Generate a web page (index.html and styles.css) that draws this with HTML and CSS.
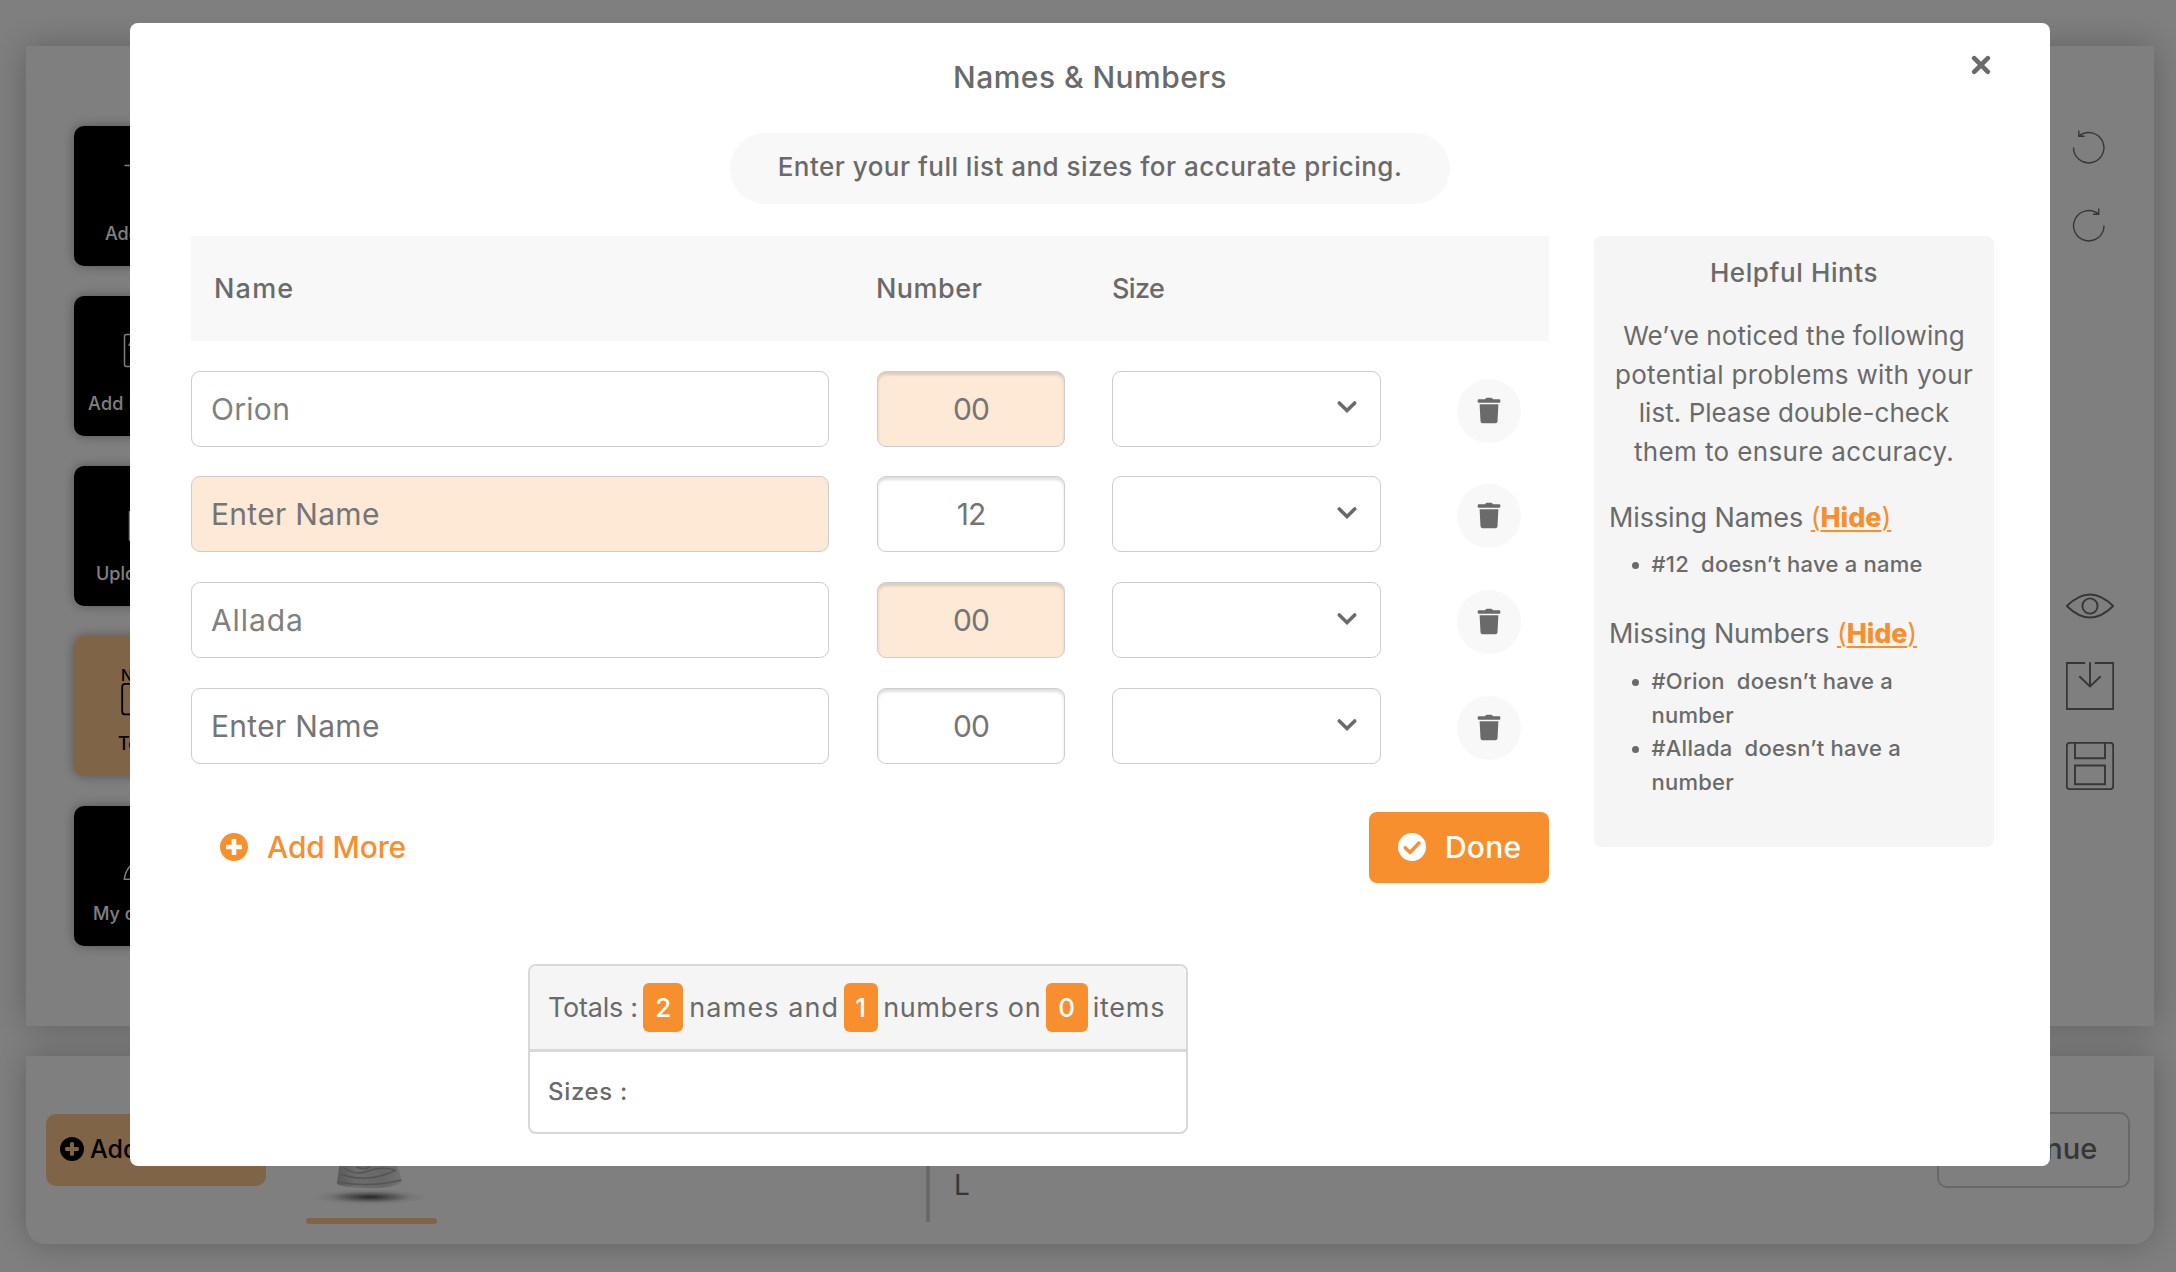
FILE: index.html
```html
<!DOCTYPE html>
<html lang="en">
<head>
<meta charset="utf-8">
<title>Names &amp; Numbers</title>
<link rel="stylesheet" href="styles.css">
</head>
<body>
<svg class="defs" aria-hidden="true">
  <symbol id="plus-circle" viewBox="0 0 28 28"><path fill="currentColor" fill-rule="evenodd" d="M14 0a14 14 0 1 0 0 28a14 14 0 0 0 0-28zM12.6 6h2.8q.9 0 .9.9v4.8h4.8q.9 0 .9.9v2.8q0 .9-.9.9h-4.8v4.8q0 .9-.9.9h-2.8q-.9 0-.9-.9v-4.8H6.900q-.9 0-.9-.9v-2.800q0-.9.9-.9h4.800V6.900q0-.9.9-.9z"/></symbol>
  <symbol id="trash" viewBox="0 0 24 28"><path fill="currentColor" d="M1.700 2.300h6.300q.5-1.600 2-1.600h4q1.500 0 2 1.600h6.300q1 0 1 1v1.400q0 1-1 1H1.700q-1 0-1-1V3.300q0-1 1-1zM2.600 7.300h18.800l-.9 16.900q-.1 2.100-2.200 2.100H5.700q-2.100 0-2.200-2.100z"/></symbol>
  <symbol id="chevron" viewBox="0 0 22 16"><path fill="none" stroke="currentColor" stroke-width="3.600" stroke-linecap="round" stroke-linejoin="miter" d="M3.300 4l7.700 7.500L18.700 4"/></symbol>
</svg>

<div class="page">
  <section class="panel workspace">
    <nav class="tools">
      <div class="tool t-text">
        <svg class="tool-icon" viewBox="0 0 42 50"><path d="M1.500 9.500H40.500M21 9.500V45"/></svg>
        <span>Add Text</span>
      </div>
      <div class="tool t-art">
        <svg class="tool-icon" viewBox="0 0 42 50"><rect x="1.500" y="8.500" width="39" height="32" rx="2"/><path d="M9 38L18 24l8 8 6-5 8 11M6 20a4 4 0 0 1 4-4"/></svg>
        <span>Add Design</span>
      </div>
      <div class="tool t-upload">
        <svg class="tool-icon" viewBox="0 0 42 50"><path d="M6.500 15V44H36V15M21 36V6M14 13l7-7 7 7"/></svg>
        <span>Upload</span>
      </div>
      <div class="tool active t-team">
        <svg class="tool-icon" viewBox="0 0 42 50"><text x="-2" y="14.500">NAME</text><rect x="-.8" y="17.900" width="42" height="30.500" rx="3"/></svg>
        <span>Team</span>
      </div>
      <div class="tool t-designs">
        <svg class="tool-icon" viewBox="0 0 42 50"><path d="M1.300 43.200a24 24 0 0 1 7-14.500L14 22h14l13 21.200z"/></svg>
        <span>My designs</span>
      </div>
    </nav>
    <div class="side-actions">
      <svg viewBox="0 0 48 48"><path stroke-width="1.400" d="M7.500 24.500a15.200 15.200 0 1 0 5.500-11.500M12.800 7.500v5.700h5.800"/></svg>
      <svg viewBox="0 0 48 48"><path stroke-width="1.400" d="M38 24.500a15.200 15.200 0 1 1-5.500-11.500M32.700 7.500v5.700h-5.800"/></svg>
      <svg class="eye" viewBox="0 0 48 48"><path d="M.8 24Q24 1 47.200 24Q24 47 .8 24z"/><circle cx="24" cy="24" r="7.600"/></svg>
      <svg viewBox="0 0 48 48"><path d="M19.200 1H.8v46h46.400V1H28.800M24 .2v24M13.300 14.200L24 24.500l10.700-10.300"/></svg>
      <svg viewBox="0 0 48 48"><rect x=".8" y=".8" width="46.400" height="46.400" rx="3"/><path d="M9 1v15.200h30V1M9 23.500h30v18.800H9z"/></svg>
    </div>
  </section>
  <section class="panel bottom">
    <button class="add-product"><svg><use href="#plus-circle"/></svg>Add Product</button>
    <div class="thumb">
      <svg viewBox="0 0 131 162">
        <defs>
          <radialGradient id="ground"><stop offset="0" stop-color="#4c4c4c"/><stop offset=".35" stop-color="#a0a0a0"/><stop offset=".7" stop-color="#ececec"/><stop offset="1" stop-color="#fff"/></radialGradient>
          <linearGradient id="cloth"><stop offset="0" stop-color="#b4b4b4"/><stop offset=".3" stop-color="#dadada"/><stop offset=".7" stop-color="#cecece"/><stop offset="1" stop-color="#e6e6e6"/></linearGradient>
        </defs>
        <ellipse cx="64" cy="141" rx="58" ry="8" fill="url(#ground)"/>
        <path fill="url(#cloth)" d="M38 60h50l2 45 6.500 21q-10 6.500-32 6.200-24-.2-33.800-4.200l3.300-23z"/>
        <path fill="none" stroke="#a8a8a8" stroke-width="1.500" d="M38 112q12 8 24 3t28-1M34 118q14 5 28 4t28-8M50 111q8 3 14 0M32 126q32 6 63-2"/>
      </svg>
      <span class="thumb-bar"></span>
    </div>
    <div class="size-block">L</div>
    <button class="continue">Continue</button>
  </section>
</div>

<div class="overlay">
  <div class="modal">
    <h2 class="modal-title">Names &amp; Numbers</h2>
    <button class="close" aria-label="Close"><svg viewBox="0 0 20 20"><path d="M3.200 3.200l13.600 13.600M16.800 3.200L3.200 16.800"/></svg></button>
    <p class="pill">Enter your full list and sizes for accurate pricing.</p>
    <div class="content">
      <main class="list">
        <div class="grid head"><span class="h-name">Name</span><span class="h-number">Number</span><span class="h-size">Size</span></div>
        <div class="rows">
          <div class="grid row">
            <div class="field name typed">Orion</div><div class="field number missing">00</div>
            <div class="field select"><svg><use href="#chevron"/></svg></div>
            <button class="delete"><svg><use href="#trash"/></svg></button>
          </div>
          <div class="grid row">
            <div class="field name missing">Enter Name</div><div class="field number">12</div>
            <div class="field select"><svg><use href="#chevron"/></svg></div>
            <button class="delete"><svg><use href="#trash"/></svg></button>
          </div>
          <div class="grid row">
            <div class="field name typed wide">Allada</div><div class="field number missing">00</div>
            <div class="field select"><svg><use href="#chevron"/></svg></div>
            <button class="delete"><svg><use href="#trash"/></svg></button>
          </div>
          <div class="grid row">
            <div class="field name">Enter Name</div><div class="field number">00</div>
            <div class="field select"><svg><use href="#chevron"/></svg></div>
            <button class="delete"><svg><use href="#trash"/></svg></button>
          </div>
        </div>
        <div class="actions">
          <button class="add-more"><svg><use href="#plus-circle"/></svg>Add More</button>
          <button class="done"><svg viewBox="0 0 28 28"><circle cx="14" cy="14" r="14" fill="#fff"/><path d="M7.200 14.800l4.800 4.700 9-9.500"/></svg>Done</button>
        </div>
        <div class="totals">
          <div class="totals-head">
            <span class="tt">Totals :</span><b class="badge">2</b><span class="tn">names and</span><b class="badge one">1</b><span class="tm">numbers on</span><b class="badge zero">0</b><span class="ti">items</span>
          </div>
          <div class="totals-body">Sizes :</div>
        </div>
      </main>
      <aside class="hints">
        <h3>Helpful Hints</h3>
        <p class="intro"><span class="l1">We’ve noticed the following</span><span class="l2">potential problems with your</span><span class="l3">list. Please double-check</span><span class="l4">them to ensure accuracy.</span></p>
        <p class="group">Missing Names <a>(<b>Hide</b>)</a></p>
        <ul><li>#12&nbsp; doesn’t have a name</li></ul>
        <p class="group second">Missing Numbers <a>(<b>Hide</b>)</a></p>
        <ul><li>#Orion&nbsp; doesn’t have a number</li><li>#Allada&nbsp; doesn’t have a number</li></ul>
      </aside>
    </div>
  </div>
</div>
</body>
</html>
```
FILE: styles.css
```css
* { box-sizing: border-box; }
body {
  margin: 0;
  height: 1272px;
  overflow: hidden;
  background: #fff;
  color: #6a6a6a;
  font-family: Inter, "Open Sans", sans-serif;
}
h2, h3, p, ul { margin: 0; padding: 0; }
button { border: 0; padding: 0; background: none; font: inherit; color: inherit; }
svg { display: block; flex: none; }
.defs { position: absolute; width: 0; height: 0; }

/* Designer page behind the dialog */
.page { display: flex; flex-direction: column; gap: 30px; height: 1272px; padding: 46px 22px 28px 26px; }
.panel { display: flex; background: #fff; box-shadow: 0 0 32px rgba(0, 0, 0, .25); }
.workspace { height: 980px; justify-content: space-between; padding: 80px 40px 0 48px; }
.tools { display: flex; flex-direction: column; gap: 30px; }
.tool {
  width: 140px; height: 140px; padding-top: 30px;
  border-radius: 10px; background: #000; color: #fff;
  box-shadow: 0 0 12px rgba(0, 0, 0, .35);
  font-size: 18px; font-weight: 500; line-height: 24px; white-space: nowrap;
}
.tool.active { background: #ffc88e; color: #000; }
.tool-icon {
  width: 42px; height: 50px; margin: 0 0 16px 49px; overflow: visible;
  fill: none; stroke: currentColor; stroke-width: 1.500;
}
.tool-icon text { fill: currentColor; stroke: none; font-size: 15.500px; }
.tool.active .tool-icon { stroke-width: 1.800; }
.t-text span { margin-left: 31px; }
.t-art span { margin-left: 14px; letter-spacing: .3px; }
.t-upload span { margin-left: 22px; }
.t-team span { margin-left: 44px; }
.t-designs span { margin-left: 19px; }
.side-actions { display: flex; flex-direction: column; margin-top: -3px; color: #6c6c6c; }
.side-actions svg { width: 48px; height: 48px; margin-bottom: 32px; fill: none; stroke: currentColor; stroke-width: 1.900; }
.side-actions svg:first-child { margin-bottom: 30px; }
.side-actions .eye { margin-top: 301px; }
.bottom { height: 188px; padding: 0 24px 0 20px; border-radius: 0 0 20px 20px; align-items: flex-start; }
.add-product {
  display: flex; align-items: center; gap: 6px; width: 220px; height: 72px; margin-top: 58px;
  padding: 0 0 2px 14px; border-radius: 10px; background: #ffc88e; color: #000;
  font-size: 25px; font-weight: 500; white-space: nowrap;
}
.add-product svg { width: 24px; height: 24px; }
.thumb { width: 131px; margin-left: 40px; }
.thumb svg { width: 131px; height: 162px; }
.thumb-bar { display: block; height: 6px; border-radius: 3px; background: #ffc88e; }
.size-block {
  height: 110px; margin: 56px 0 0 489px; padding-left: 24px; border-left: 4px solid #d4d4d4;
  font-size: 28px; line-height: 147px; color: #6c6c6c;
}
.continue {
  width: 193px; height: 76px; margin: 56px 0 0 auto; padding: 0 0 3px 2px; border: 2px solid #d0d0d0; border-radius: 10px;
  font-size: 29px; font-weight: 500; color: #6c6c6c;
}

/* Dialog */
.overlay { position: fixed; inset: 0; padding: 22.700px 0 0 130px; background: rgba(0, 0, 0, .5); }
.modal {
  position: relative; display: flex; flex-direction: column; align-items: center;
  width: 1920px; height: 1143.300px; padding-top: 32px; border-radius: 8px; background: #fff;
}
.modal-title { font-size: 30px; font-weight: 500; line-height: 44px; letter-spacing: .45px; }
.close { position: absolute; top: 32.500px; right: 59px; }
.close svg { width: 20px; height: 20px; fill: none; stroke: currentColor; stroke-width: 4.600; stroke-linecap: round; }
.pill {
  width: 720px; height: 71px; margin-top: 34.300px; border-radius: 36px; background: #f8f8f8;
  text-align: center; font-size: 26px; font-weight: 500; line-height: 68px; letter-spacing: .48px;
}
.content { display: flex; gap: 45px; align-items: flex-start; align-self: stretch; margin-top: 32px; padding-left: 61px; }
.list { width: 1358px; }
.grid { display: grid; grid-template-columns: 638px 188px 269px 64px; column-gap: 48px; }
.grid > :nth-child(3) { margin-left: -1px; width: 269px; }
.grid > :nth-child(4) { margin-left: 26.500px; }
.head { height: 105.500px; align-items: center; background: #f8f8f8; font-size: 27px; font-weight: 500; }
.h-name { padding-left: 23px; letter-spacing: 1.200px; }
.h-number { margin-left: -1px; letter-spacing: .45px; }
.h-size { letter-spacing: -.6px; }
.rows { display: flex; flex-direction: column; gap: 29.800px; margin-top: 29.200px; }
.row { height: 76px; }
.field {
  display: flex; align-items: center; border: 1.500px solid #cdcdcd; border-radius: 9px;
  background: #fff; color: #757575; font-size: 30px; letter-spacing: .3px;
}
.field.name { padding-left: 19px; }
.field.typed { color: #808080; }
.field.wide { letter-spacing: .9px; }
.field.number { justify-content: center; letter-spacing: -1px; box-shadow: inset 0 3px 3px rgba(0, 0, 0, .13); }
.field.missing { background: #fee8d6; }
.field.select { justify-content: flex-end; padding: 0 22px 3px 0; color: #6a6a6a; }
.select svg { width: 22px; height: 16px; }
.delete {
  display: flex; align-items: center; justify-content: center; width: 64px; height: 64px;
  margin-top: 8px; border-radius: 50%; background: #f8f8f8;
}
.delete svg { width: 24px; height: 28px; }
.actions {
  display: flex; justify-content: space-between; height: 71px; margin-top: 48px;
  font-size: 30px; font-weight: 500;
}
.add-more, .done { display: flex; align-items: center; padding-bottom: 2px; }
.add-more svg, .done svg { width: 28px; height: 28px; }
.add-more { gap: 19px; padding-left: 29px; color: #f78f2f; letter-spacing: -.15px; }
.done { gap: 19px; width: 180px; padding-left: 29px; border-radius: 8px; background: #f78f2f; color: #fff; letter-spacing: .2px; }
.done path { fill: none; stroke: #f78f2f; stroke-width: 3.400; stroke-linecap: round; stroke-linejoin: round; }
.totals { width: 660px; height: 169.500px; margin: 81px 0 0 337px; border: 2px solid #d8d8d8; border-radius: 8px; overflow: hidden; }
.totals-head {
  display: flex; align-items: center; height: 86px; padding-left: 18px; border-bottom: 3px solid #d8d8d8;
  background: #f5f5f5; font-size: 27px; white-space: nowrap;
}
.totals-head .tt { letter-spacing: -.25px; }
.totals-head .tn { letter-spacing: 1.100px; }
.totals-head .tm { letter-spacing: .6px; }
.totals-head .ti { letter-spacing: .75px; }
.badge {
  width: 40px; height: 49px; margin: 0 6px 0 5.500px; border-radius: 6px; background: #f78f2f; color: #fff;
  text-align: center; font-size: 26px; font-weight: 500; line-height: 49px;
}
.badge.one { width: 34px; margin: 0 5.500px 0 4.500px; }
.badge.zero { width: 42px; margin: 0 5px 0 4.500px; }
.totals-body { padding-left: 18px; font-size: 24px; font-weight: 500; line-height: 79px; letter-spacing: .67px; }

.hints { width: 400px; height: 611px; padding-top: 17px; border-radius: 8px; background: #f5f5f5; }
.hints h3 { font-size: 26px; font-weight: 500; line-height: 39px; letter-spacing: .6px; text-align: center; }
.intro { margin-top: 25px; font-size: 26px; line-height: 38.700px; text-align: center; white-space: nowrap; }
.intro span { display: block; }
.l1 { letter-spacing: .1px; }
.l2 { letter-spacing: .33px; }
.l3 { letter-spacing: .04px; }
.l4 { letter-spacing: .38px; }
.group { margin: 26.300px 0 9.600px; padding-left: 15px; font-size: 27px; line-height: 40px; letter-spacing: -.08px; }
.group.second { margin: 32.700px 0 11px; letter-spacing: -.15px; }
.group a { color: #f78f2f; text-decoration: underline; text-decoration-thickness: 2px; text-underline-offset: 3px; }
.group b { font-weight: 800; }
.hints ul {
  padding: 0 60px 0 57.500px; list-style: none;
  font-size: 22px; font-weight: 500; line-height: 33.700px; letter-spacing: .23px;
}
.hints li::before {
  content: ""; float: left; width: 7px; height: 7px; margin: 14px 0 0 -19.500px; border-radius: 50%; background: #6a6a6a;
}
```
